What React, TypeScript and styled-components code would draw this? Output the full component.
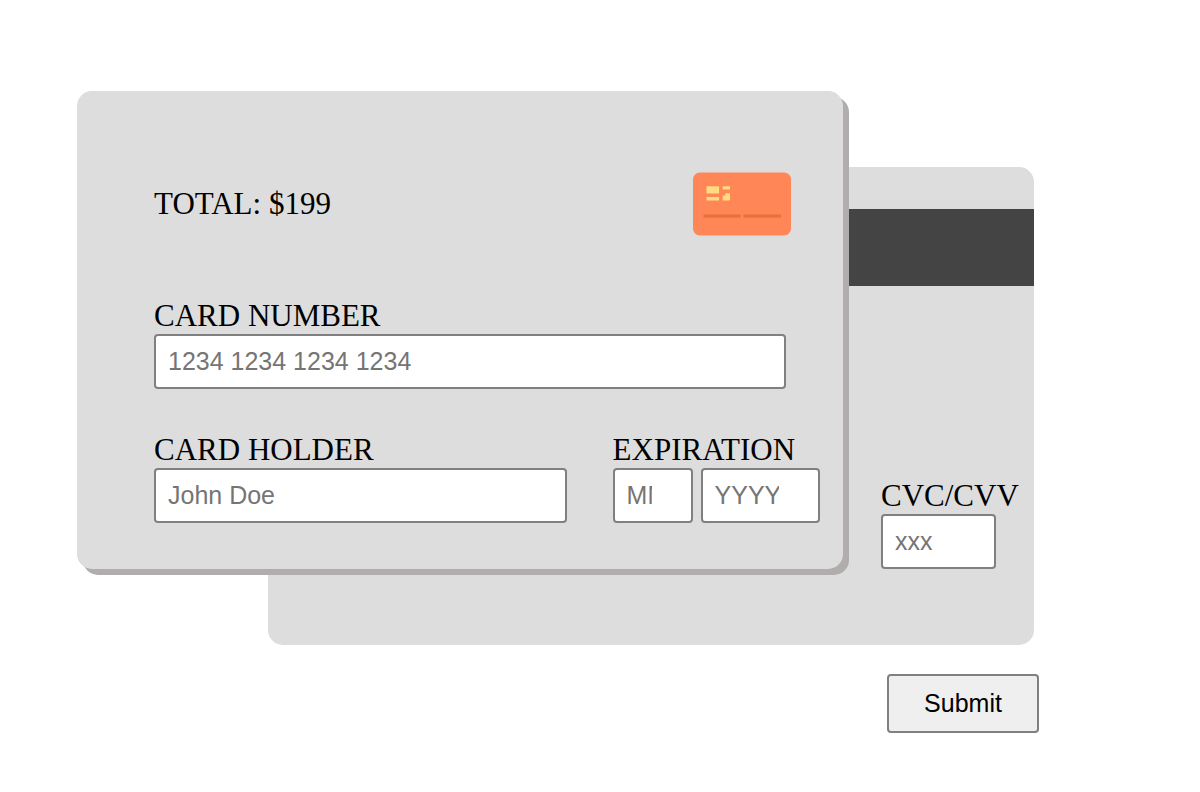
import React from "react";
import styled, { createGlobalStyle } from "styled-components";

const GlobalStyle = createGlobalStyle`
  *, *::before, *::after { box-sizing: border-box; }
  body {
    margin: 0;
    background: #fff;
    color: #000;
    font-family: "Liberation Serif", "Times New Roman", serif;
    font-size: 31px;
    line-height: 32px;
  }
`;

const Form = styled.form`
  display: flex;
  flex-direction: column;
  padding: 91px 161px 56px 77px;
`;

const Cards = styled.div`
  display: grid;
  grid-template-columns: 1fr 3fr 1fr;
  grid-template-rows: 76px auto 76px;
  margin-right: 5px;
`;

const Card = styled.section`
  display: flex;
  flex-direction: column;
  min-width: 0;
  border-radius: 15px;
  background: #ddd;
`;

const Front = styled(Card)`
  grid-area: 1 / 1 / 3 / 3;
  z-index: 1;
  padding: 81px 23px 46px 77px;
  box-shadow: 6px 6px 0 #b1adad;
`;

const Back = styled(Card)`
  grid-area: 2 / 2 / 4 / 4;
  padding: 42px 0 76px;
`;

const Header = styled.header`
  display: flex;
  align-items: center;
  justify-content: space-between;
  margin-bottom: 64px;
  padding-right: 29px;
`;

const Total = styled.p`
  margin: 0;
`;

const CardLogo = styled.svg`
  display: block;
  width: 98px;
  height: 64px;
`;

const Stripe = styled.div`
  height: 77px;
  background: #444;
`;

const Row = styled.div`
  display: flex;
  gap: 46px;
  margin-top: 45px;
`;

const Field = styled.div<{ $grow?: boolean }>`
  display: flex;
  flex-direction: column;
  min-width: 0;
  flex: ${(p) => (p.$grow ? "1" : "none")};
`;

const SecurityField = styled(Field)`
  width: 135px;
  margin: auto 18px 0 auto;
`;

const Label = styled.label`
  padding-bottom: 2px;
`;

const Expiration = styled.fieldset`
  min-width: 0;
  margin: 0;
  padding: 0;
  border: 0;
`;

const Legend = styled.legend`
  padding: 0 0 2px;
`;

const DateParts = styled.div`
  display: flex;
  gap: 8px;
`;

const Input = styled.input<{ $width?: string; $stepper?: boolean }>`
  width: ${(p) => p.$width ?? "100%"};
  height: 55px;
  padding: 0 ${(p) => (p.$stepper ? "39px" : "12px")} 0 12px;
  border: 2px solid #808080;
  border-radius: 4px;
  background: #fff;
  color: #000;
  font-family: "Liberation Sans", Arial, sans-serif;
  font-size: 25px;

  &::placeholder {
    color: #757575;
    opacity: 1;
  }
`;

const Submit = styled.button`
  align-self: flex-end;
  width: 152px;
  height: 59px;
  margin-top: 29px;
  padding: 0;
  border: 2px solid #808080;
  border-radius: 4px;
  background: #efefef;
  color: #000;
  font-family: "Liberation Sans", Arial, sans-serif;
  font-size: 25px;
`;

export default function App() {
  return (
    <>
      <GlobalStyle />
      <Form onSubmit={(e) => e.preventDefault()}>
        <Cards>
          <Front>
            <Header>
              <Total>TOTAL: $199</Total>
              <CardLogo viewBox="0 0 98 64" aria-hidden="true">
                <rect y="0.5" width="98" height="63" rx="7" fill="#ff8657" />
                <g fill="#ffdc82">
                  <rect x="13.5" y="14.2" width="12.6" height="7.4" rx="0.6" />
                  <rect x="13.5" y="25" width="12.6" height="3.6" rx="0.6" />
                  <rect x="29.7" y="14.2" width="7.3" height="3.4" rx="0.6" />
                  <path d="M32.4 21.2h4.6v6.4q0 1-1 1h-6.3v-5h2.7z" />
                </g>
                <g fill="#e6713f">
                  <rect x="10.5" y="42.5" width="37" height="3.2" />
                  <rect x="50.5" y="42.5" width="37.5" height="3.2" />
                </g>
              </CardLogo>
            </Header>
            <Field>
              <Label htmlFor="number">CARD NUMBER</Label>
              <Input id="number" $width="95%" placeholder="1234 1234 1234 1234" inputMode="numeric" />
            </Field>
            <Row>
              <Field $grow>
                <Label htmlFor="holder">CARD HOLDER</Label>
                <Input id="holder" placeholder="John Doe" />
              </Field>
              <Expiration>
                <Legend>EXPIRATION</Legend>
                <DateParts>
                  <Input $width="80px" $stepper placeholder="MM" aria-label="Month" inputMode="numeric" />
                  <Input $width="119px" $stepper placeholder="YYYY" aria-label="Year" inputMode="numeric" />
                </DateParts>
              </Expiration>
            </Row>
          </Front>
          <Back>
            <Stripe />
            <SecurityField>
              <Label htmlFor="cvc">CVC/CVV</Label>
              <Input id="cvc" $width="115px" placeholder="xxx" inputMode="numeric" />
            </SecurityField>
          </Back>
        </Cards>
        <Submit type="submit">Submit</Submit>
      </Form>
    </>
  );
}
